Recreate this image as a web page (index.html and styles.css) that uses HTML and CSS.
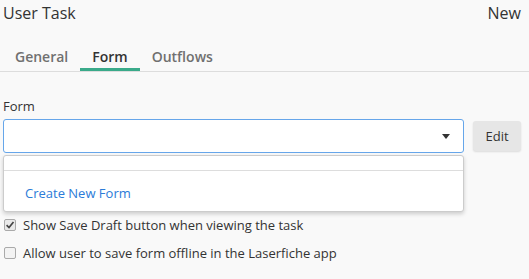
FILE: index.html
```html
<!DOCTYPE html>
<html lang="en">
<head>
    <meta charset="UTF-8">
    <title>User Task</title>
    <link rel="stylesheet" href="styles.css">
</head>
<body>

    <!-- Header -->
    <div class="header">
        <span class="title">User Task</span>
        <span class="status">New</span>
    </div>

    <!-- Tabs -->
    <div class="tabs">
        <span class="tab">General</span>
        <span class="tab active">Form</span>
        <span class="tab">Outflows</span>
    </div>

    <!-- Form panel -->
    <div class="panel">
        <label class="field-label">Form</label>
        <div class="field-row">
            <div class="select-wrap">
                <div class="select">
                    <span class="caret"></span>
                </div>
                <div class="dropdown">
                    <div class="dropdown-search"></div>
                    <div class="dropdown-item">Create New Form</div>
                </div>
            </div>
            <button class="btn">Edit</button>
        </div>

        <!-- rows hidden behind the open dropdown -->
        <div class="check-row hidden-row">
            <span class="box"></span>
        </div>
        <div class="check-row hidden-row">
            <span class="box"></span>
        </div>
        <div class="check-row">
            <span class="box checked">
                <svg width="10" height="10" viewBox="0 0 10 10"><path d="M1.6 5.2 L4 7.5 L8.5 2" fill="none" stroke="#444" stroke-width="1.7"/></svg>
            </span>
            <span>Show Save Draft button when viewing the task</span>
        </div>
        <div class="check-row">
            <span class="box"></span>
            <span>Allow user to save form offline in the Laserfiche app</span>
        </div>
    </div>

</body>
</html>
```

FILE: styles.css
```css
/* General Reset */
* {
    margin: 0;
    padding: 0;
    box-sizing: border-box;
}

body {
    background: #f9f9f9;
    color: #333;
    font-family: 'Open Sans', sans-serif;
    font-size: 13px;
}

/* Header */
.header {
    display: flex;
    justify-content: space-between;
    padding: 1px 8px 0 3px;
    height: 27px;
    font-size: 16px;
    line-height: 24px;
}

/* Tabs */
.tabs {
    display: flex;
    padding-left: 3px;
    margin-top: 15px;
    border-bottom: 1px solid #ddd;
}

.tab {
    padding: 5px 12px 1px;
    font-size: 14px;
    font-weight: 600;
    line-height: 20px;
    color: #707070;
    border-bottom: 3px solid transparent;
}

.tab.active {
    color: #333;
    border-bottom-color: #3aaa8a;
}

/* Panel */
.panel {
    padding: 25px 8px 0 3px;
}

.field-label {
    display: block;
    line-height: 18px;
    margin-bottom: 4px;
}

.field-row {
    display: flex;
    align-items: center;
    gap: 9px;
}

.select-wrap {
    position: relative;
    flex: 1;
}

.select {
    height: 34px;
    background: #fff;
    border: 1px solid #66a6ea;
    border-radius: 3px;
    position: relative;
}

.caret {
    position: absolute;
    right: 13px;
    top: 14px;
    border-left: 4px solid transparent;
    border-right: 4px solid transparent;
    border-top: 5px solid #333;
}

.dropdown {
    position: absolute;
    top: 36px;
    left: 0;
    right: 0;
    height: 57px;
    background: #fff;
    border: 1px solid #ccc;
    border-radius: 3px;
    box-shadow: 0 2px 4px rgba(0, 0, 0, 0.18);
    z-index: 5;
}

.dropdown-search {
    height: 15px;
    border-bottom: 1px solid #ddd;
}

.dropdown-item {
    padding: 13px 21px 0;
    line-height: 18px;
    color: #2b7bd8;
}

.btn {
    width: 48px;
    height: 30px;
    font-family: 'Open Sans', sans-serif;
    font-size: 13px;
    color: #333;
    background: #e6e6e6;
    border: none;
    border-radius: 3px;
    box-shadow: 0 1px 2px rgba(0, 0, 0, 0.12);
}

/* Checkboxes */
.check-row {
    display: flex;
    align-items: center;
    gap: 7px;
    height: 28px;
    padding-left: 1px;
}

.hidden-row {
    height: 24px;
}

.field-row + .check-row {
    margin-top: 10px;
}

.box {
    width: 12px;
    height: 12px;
    border: 1px solid #aaa;
    border-radius: 2px;
    background: #f3f3f3;
    display: flex;
    align-items: center;
    justify-content: center;
}

.box.checked {
    background: #e9e9e9;
}
```
